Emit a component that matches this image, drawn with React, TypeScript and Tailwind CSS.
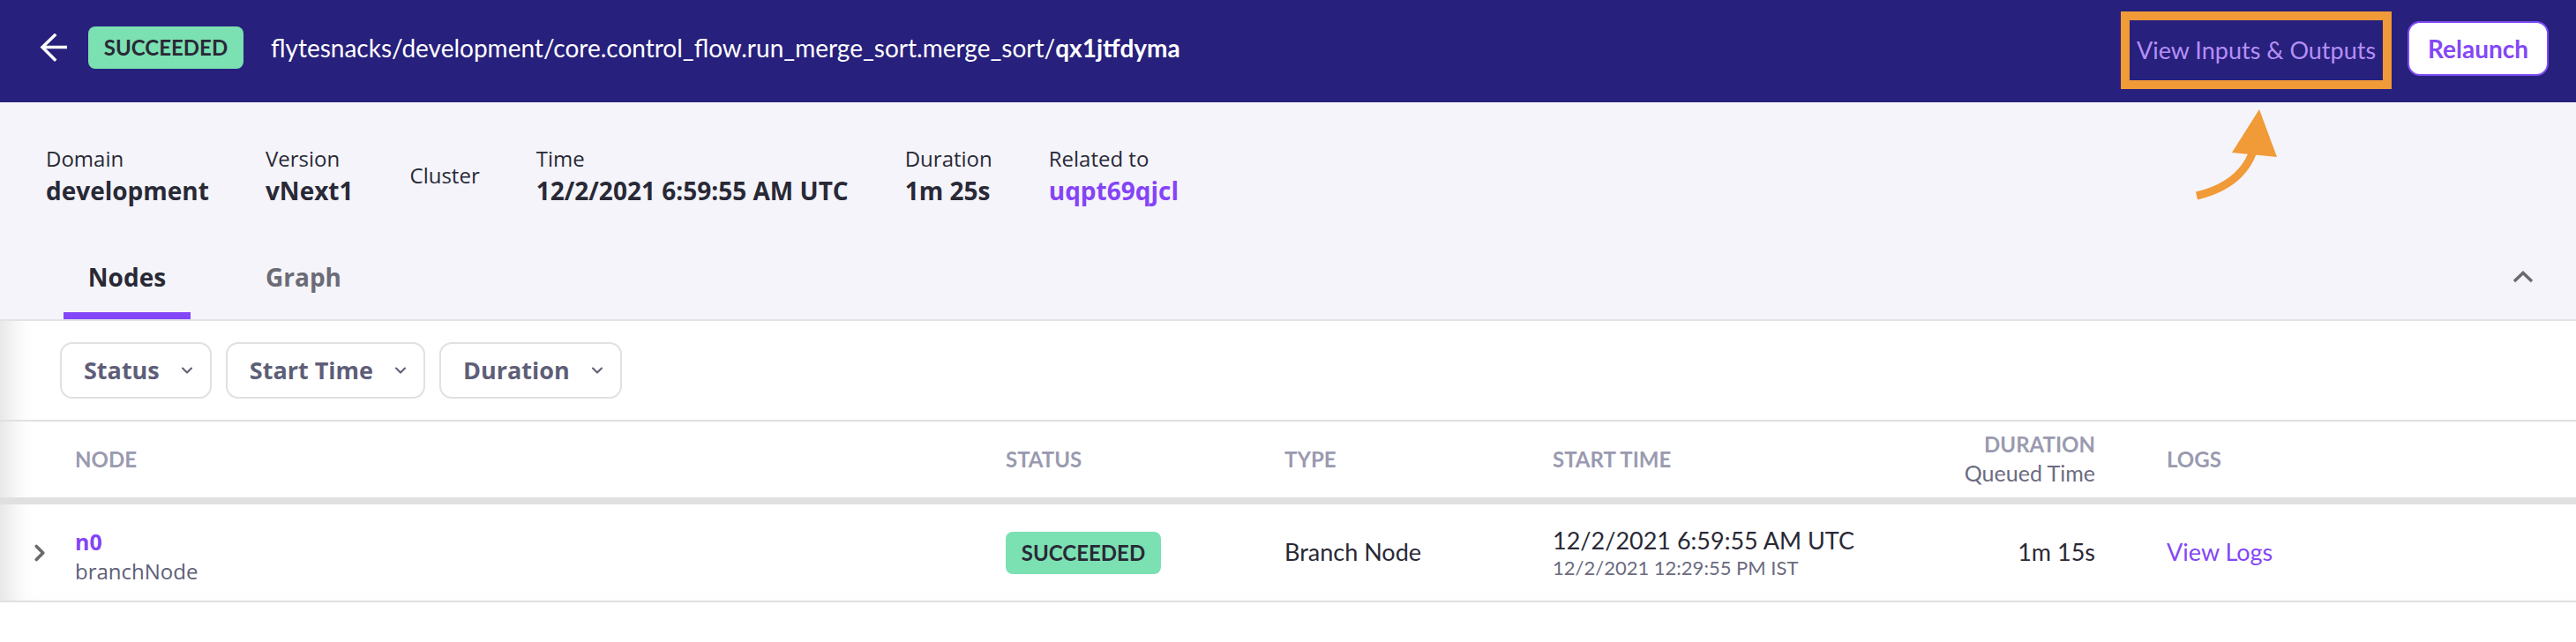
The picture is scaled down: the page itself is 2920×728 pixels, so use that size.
import { ChevronDown, ChevronRight } from 'lucide-react';

const lato = "font-['Lato','Liberation_Sans',sans-serif]";
const open = "font-['Open_Sans','Liberation_Sans',sans-serif]";

function StatusBadge() {
  return (
    <div
      className={`flex h-[48px] w-[176px] items-center justify-center rounded-[8px] bg-[#7be0b2] text-[24px] font-bold text-[#292936] ${lato}`}
    >
      SUCCEEDED
    </div>
  );
}

function BackArrow() {
  return (
    <svg width="32" height="32" viewBox="0 0 32 32" fill="none" stroke="white" strokeWidth="3.5">
      <line x1="3" y1="15.5" x2="31" y2="15.5" />
      <polyline points="17,2 3,15.5 17,29.5" strokeLinecap="square" />
    </svg>
  );
}

function MetaItem({ label, value, link }: { label: string; value?: string; link?: boolean }) {
  return (
    <div className={`flex flex-col justify-center ${open}`}>
      <div className="text-[24px] leading-[32px] text-[#292936]">{label}</div>
      {value && (
        <div
          className={`mt-[2px] text-[28px] font-bold leading-[36px] ${link ? 'text-[#8543f7]' : 'text-[#292936]'}`}
        >
          {value}
        </div>
      )}
    </div>
  );
}

function FilterButton({ label }: { label: string }) {
  return (
    <button
      className={`flex h-[64px] items-center gap-[21px] rounded-[14px] border-2 border-[#e1e1e1] bg-white pl-[25px] pr-[16px] text-[27px] font-bold text-[#5e5e78] ${open}`}
    >
      {label}
      <ChevronDown size={20} strokeWidth={2.5} />
    </button>
  );
}

export default function App() {
  return (
    <div className="relative h-[728px] w-[2920px] overflow-hidden bg-white">
      {/* top bar */}
      <header className="flex h-[116px] items-center bg-[#27207c] pb-[8px] pl-[45px] pr-[31px]">
        <BackArrow />
        <div className="ml-[23px]">
          <StatusBadge />
        </div>
        <div className={`ml-[31px] text-[28px] text-white ${lato}`}>
          flytesnacks/development/core.control_flow.run_merge_sort.merge_sort/
          <span className="font-bold">qx1jtfdyma</span>
        </div>
        <div className="flex-1" />
        <div className="mt-[6px] flex h-[88px] w-[307px] items-center justify-center border-[10px] border-[#f09a38]">
          <span className={`text-[27px] text-[#b58ff5] ${lato}`}>View Inputs &amp; Outputs</span>
        </div>
        <button
          className={`ml-[18px] mt-[2px] h-[62px] w-[160px] rounded-[14px] border-2 border-[#7f4cf5] bg-white text-[28px] font-bold text-[#8447f7] ${lato}`}
        >
          Relaunch
        </button>
      </header>

      <div className="shadow-[inset_28px_0_30px_-18px_rgba(0,0,0,0.12)]">
        {/* execution metadata + tabs */}
        <section className="bg-[#f4f4fa]">
          <div className="flex gap-[64px] pl-[52px] pt-[48px]">
            <MetaItem label="Domain" value="development" />
            <MetaItem label="Version" value="vNext1" />
            <MetaItem label="Cluster" />
            <MetaItem label="Time" value="12/2/2021 6:59:55 AM UTC" />
            <MetaItem label="Duration" value="1m 25s" />
            <MetaItem label="Related to" value="uqpt69qjcl" link />
          </div>

          <div className="mt-[40px] flex border-b-2 border-[#e2e2e8] pl-[72px] pr-[48px]">
            <div className={`flex w-[144px] flex-col items-center pt-[20px] ${open}`}>
              <span className="text-[28px] font-bold leading-[40px] text-[#292936]">Nodes</span>
              <div className="mt-[20px] h-[8px] w-full bg-[#8447f7]" />
            </div>
            <div className={`ml-[56px] flex w-[144px] flex-col items-center pt-[20px] ${open}`}>
              <span className="text-[28px] font-bold leading-[40px] text-[#6b6b76]">Graph</span>
            </div>
            <div className="flex-1" />
            <svg className="mt-[33px]" width="24" height="14" viewBox="0 0 24 14" fill="none" stroke="#6b6b6b" strokeWidth="3.5">
              <polyline points="2,12 12,2.5 22,12" />
            </svg>
          </div>
        </section>

        {/* filters */}
        <div className="flex gap-[16px] border-b-2 border-[#e0e0e0] px-[68px] py-[24px]">
          <FilterButton label="Status" />
          <FilterButton label="Start Time" />
          <FilterButton label="Duration" />
        </div>

        {/* node table */}
        <div className="grid h-[94px] grid-cols-[85px_1055px_316px_304px_440px_175px_1fr] items-center border-b-[8px] border-[#e0e0e0] text-[24px] font-bold text-[#9a9ab0]">
          <div />
          <div className={lato}>NODE</div>
          <div className={lato}>STATUS</div>
          <div className={lato}>TYPE</div>
          <div className={lato}>START TIME</div>
          <div className={`flex flex-col items-end ${lato}`}>
            <span className="leading-[30px]">DURATION</span>
            <span className="text-[25px] font-normal leading-[34px] text-[#6b6b80]">Queued Time</span>
          </div>
          <div className={`pl-[81px] ${lato}`}>LOGS</div>
        </div>

        <div className="grid h-[111px] grid-cols-[85px_1055px_316px_304px_440px_175px_1fr] items-center border-b-2 border-[#e0e0e0]">
          <div className="flex justify-center pl-[4px] text-[#6b6b6b]">
            <ChevronRight size={30} strokeWidth={3} />
          </div>
          <div className={`mt-[6px] flex flex-col ${open}`}>
            <span className="text-[25px] font-bold leading-[36px] text-[#8543f7]">n0</span>
            <span className="text-[24px] leading-[32px] text-[#5e5e78]">branchNode</span>
          </div>
          <div>
            <StatusBadge />
          </div>
          <div className={`text-[27px] text-[#292936] ${lato}`}>Branch Node</div>
          <div className={`flex flex-col ${lato}`}>
            <span className="text-[27px] leading-[35px] text-[#292936]">12/2/2021 6:59:55 AM UTC</span>
            <span className="text-[22px] leading-[28px] text-[#6b6b80]">12/2/2021 12:29:55 PM IST</span>
          </div>
          <div className={`text-right text-[27px] text-[#292936] ${lato}`}>1m 15s</div>
          <div className={`pl-[81px] text-[27px] text-[#8447f7] ${lato}`}>View Logs</div>
        </div>
      </div>

      {/* annotation arrow pointing at the outlined button */}
      <svg
        className="absolute left-[2470px] top-[116px]"
        width="130"
        height="120"
        viewBox="0 0 130 120"
        fill="none"
      >
        <path d="M20 106 Q 70 94 84 56" stroke="#f09a38" strokeWidth="9" />
        <polygon points="91,8 60,57 111,62" fill="#f09a38" />
      </svg>
    </div>
  );
}
